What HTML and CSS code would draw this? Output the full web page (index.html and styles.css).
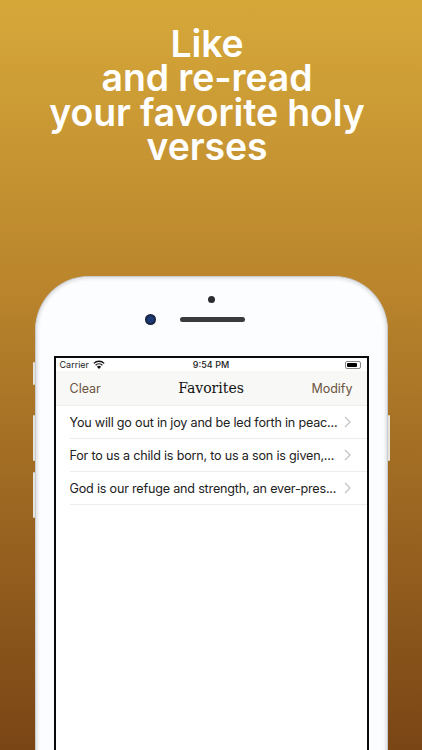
FILE: index.html
```html
<!DOCTYPE html>
<html lang="en">
<head>
<meta charset="utf-8">
<title>Favorites</title>
<link rel="stylesheet" href="styles.css">
</head>
<body>
<main class="poster">
  <h1 class="headline">Like<br>and re-read<br>your favorite holy<br>verses</h1>
  <div class="phone">
    <span class="side-btn btn-mute"></span>
    <span class="side-btn btn-up"></span>
    <span class="side-btn btn-down"></span>
    <span class="side-btn btn-power"></span>
    <div class="bezel">
      <span class="sensor"></span>
      <div class="cam-row">
        <span class="camera"></span>
        <span class="speaker"></span>
      </div>
    </div>
    <div class="screen">
      <div class="statusbar">
        <div class="status-left">
          <span>Carrier</span>
          <svg class="wifi" viewBox="0 0 12 9" width="12" height="9"><path d="M6 9 3.9 6.7a3 3 0 0 1 4.2 0Z" fill="#111"/><path d="M2.6 5.3a4.9 4.9 0 0 1 6.8 0" fill="none" stroke="#111" stroke-width="1.3"/><path d="M.8 3.4a7.4 7.4 0 0 1 10.4 0" fill="none" stroke="#111" stroke-width="1.3"/></svg>
        </div>
        <span class="status-time">9:54 PM</span>
        <div class="battery"><span class="battery-fill"></span></div>
      </div>
      <nav class="navbar">
        <span class="nav-btn">Clear</span>
        <span class="nav-title">Favorites</span>
        <span class="nav-btn nav-right">Modify</span>
      </nav>
      <ul class="list">
        <li class="row"><span class="row-text">You will go out in joy and be led forth in peac...</span><svg class="chev" viewBox="0 0 7 12" width="7" height="12"><path d="M1 1l5 5-5 5" fill="none" stroke="#c4c4c8" stroke-width="1.3"/></svg></li>
        <li class="row"><span class="row-text">For to us a child is born, to us a son is given,...</span><svg class="chev" viewBox="0 0 7 12" width="7" height="12"><path d="M1 1l5 5-5 5" fill="none" stroke="#c4c4c8" stroke-width="1.3"/></svg></li>
        <li class="row"><span class="row-text">God is our refuge and strength, an ever-pres...</span><svg class="chev" viewBox="0 0 7 12" width="7" height="12"><path d="M1 1l5 5-5 5" fill="none" stroke="#c4c4c8" stroke-width="1.3"/></svg></li>
      </ul>
    </div>
  </div>
</main>
</body>
</html>
```
FILE: styles.css
```css
* { box-sizing: border-box; }
html, body { margin: 0; padding: 0; }
body { width: 422px; height: 750px; overflow: hidden; }
.poster {
  width: 422px; height: 750px; overflow: hidden;
  display: flex; flex-direction: column; align-items: center;
  padding-top: 27px;
  background: linear-gradient(180deg, #d6a83a 0%, #ba852c 38%, #7a4515 100%);
}
.headline {
  margin: 0 8px 0 0; color: #fff; text-align: center;
  font: 600 37.4px/34.3px Inter, "Noto Sans", sans-serif;
  letter-spacing: -0.1px; white-space: nowrap;
}
.phone {
  position: relative; width: 353px; flex: none; margin-top: 112px; height: 520px;
  background: #fcfdff;
  border: 1px solid #c9cacd; border-bottom: 0;
  border-radius: 54px 54px 0 0;
  box-shadow: inset 0 0 3px 2px #e3e4e7;
  padding: 0 18px;
}
.side-btn { position: absolute; width: 2px; background: #e6e4de; border-radius: 1px; }
.btn-mute { left: -3px; top: 85px; height: 23px; }
.btn-up { left: -3px; top: 138px; height: 46px; }
.btn-down { left: -3px; top: 195px; height: 46px; }
.btn-power { right: -3px; top: 138px; height: 46px; }
.bezel {
  height: 79px; display: flex; flex-direction: column; align-items: center; padding-top: 19px;
}
.sensor { width: 7px; height: 7px; border-radius: 50%; background: #2b2c30; }
.cam-row { display: flex; align-items: center; gap: 24px; margin-top: 11px; margin-left: -32px; }
.camera {
  width: 11px; height: 11px; border-radius: 50%;
  background: radial-gradient(circle, #1c3a78 0 35%, #141a2c 70%);
}
.speaker { width: 65px; height: 5px; border-radius: 3px; background: #3a3b3f; }
.screen {
  height: 420px; background: #fff;
  border: solid #0a0a0a; border-width: 2px 2px 0;
  font-family: Inter, "Noto Sans", sans-serif;
}
.statusbar {
  height: 13px; display: grid; grid-template-columns: 1fr auto 1fr; align-items: center;
  padding: 0 4px; font-size: 9px; color: #222;
  background: #fff;
}
.status-left { display: flex; align-items: center; gap: 4px; }
.status-time { font-weight: 500; }
.battery {
  justify-self: end; width: 16px; height: 8px; margin-right: 2px; padding: 1px;
  border: 1px solid #888; border-radius: 2px;
}
.battery-fill { display: block; width: 10px; height: 100%; background: #000; border-radius: 1px; }
.navbar {
  height: 35px; display: grid; grid-template-columns: 1fr auto 1fr; align-items: center;
  padding: 0 14px; background: #f8f8f7; border-bottom: 1px solid #eeeeee;
}
.nav-btn { font-size: 12.5px; color: #6b5440; }
.nav-right { justify-self: end; }
.nav-title { font: 14px "DejaVu Serif", serif; color: #111; }
.list { list-style: none; margin: 0; padding: 0 0 0 14px; }
.row {
  height: 33px; display: flex; align-items: center; justify-content: space-between;
  padding-right: 16px; border-bottom: 1px solid #ececec;
}
.row-text { font-size: 12.6px; letter-spacing: -0.2px; color: #222; white-space: nowrap; }
.chev { flex: none; }
```
